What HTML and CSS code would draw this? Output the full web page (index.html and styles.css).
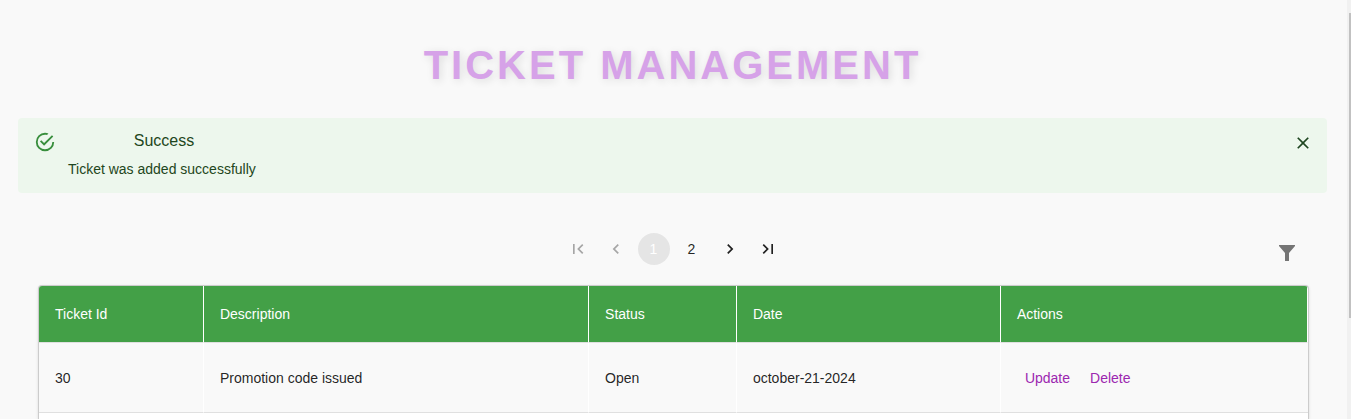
FILE: index.html
```html
<!DOCTYPE html>
<html lang="en">
<head>
<meta charset="utf-8">
<title>Ticket Management</title>
<link rel="stylesheet" href="styles.css">
</head>
<body>
<main class="page">
  <h1 class="title">Ticket Management</h1>
  <div class="alert" role="alert">
    <svg class="alert-icon" viewBox="0 0 24 24" aria-hidden="true"><path d="M20,12A8,8 0 0,1 12,20A8,8 0 0,1 4,12A8,8 0 0,1 12,4C12.76,4 13.5,4.11 14.2,4.31L15.77,2.74C14.61,2.26 13.34,2 12,2A10,10 0 0,0 2,12A10,10 0 0,0 12,22A10,10 0 0,0 22,12M7.91,10.08L6.5,11.5L11,16L21,6L19.59,4.58L11,13.17L7.91,10.08Z"/></svg>
    <div class="alert-message">
      <div class="alert-title">Success</div>
      <div>Ticket was added successfully</div>
    </div>
    <button class="alert-close" type="button" aria-label="Close"><svg viewBox="0 0 24 24"><path d="M19 6.41L17.59 5 12 10.59 6.41 5 5 6.41 10.59 12 5 17.59 6.41 19 12 13.41 17.59 19 19 17.59 13.41 12z"/></svg></button>
  </div>
  <section class="tickets">
    <div class="toolbar">
      <nav class="pagination" aria-label="Pagination">
        <button class="page-item" type="button" disabled aria-label="First page"><svg viewBox="0 0 24 24"><path d="M18.41 16.59L13.82 12l4.59-4.59L17 6l-6 6 6 6zM6 6h2v12H6z"/></svg></button>
        <button class="page-item" type="button" disabled aria-label="Previous page"><svg viewBox="0 0 24 24"><path d="M15.41 7.41L14 6l-6 6 6 6 1.41-1.41L10.83 12z"/></svg></button>
        <button class="page-item page-current" type="button" aria-current="page">1</button>
        <button class="page-item" type="button">2</button>
        <button class="page-item" type="button" aria-label="Next page"><svg viewBox="0 0 24 24"><path d="M10 6L8.59 7.41 13.17 12l-4.58 4.59L10 18l6-6z"/></svg></button>
        <button class="page-item" type="button" aria-label="Last page"><svg viewBox="0 0 24 24"><path d="M5.59 7.41L10.18 12l-4.59 4.59L7 18l6-6-6-6zM16 6h2v12h-2z"/></svg></button>
      </nav>
      <button class="filter" type="button" aria-label="Filter"><svg viewBox="0 0 16 16"><path d="M0 0h16v1l-6 7v8H6V8L0 1z"/></svg></button>
    </div>
    <div class="table-card">
      <table class="table">
        <colgroup><col class="col-id"><col class="col-description"><col class="col-status"><col class="col-date"><col class="col-actions"></colgroup>
        <thead>
          <tr><th>Ticket Id</th><th>Description</th><th>Status</th><th>Date</th><th>Actions</th></tr>
        </thead>
        <tbody>
          <tr><td>30</td><td>Promotion code issued</td><td>Open</td><td>october-21-2024</td><td><div class="actions"><button class="link-button" type="button">Update</button><button class="link-button" type="button">Delete</button></div></td></tr>
        </tbody>
      </table>
    </div>
  </section>
</main>
<div class="scroll-track" aria-hidden="true"><div class="scroll-thumb"></div></div>
</body>
</html>
```
FILE: styles.css
```css
* { box-sizing: border-box; }
html { height: 100%; }
body {
  display: flex;
  height: 100%;
  margin: 0;
  overflow: hidden;
  background: #f9f9f9;
  color: rgba(0, 0, 0, 0.87);
  font: 14px/20px "Liberation Sans", Arial, sans-serif;
}
button {
  border: 0;
  padding: 0;
  background: none;
  color: inherit;
  font: inherit;
  cursor: pointer;
}
svg { display: block; fill: currentColor; }
.page { display: flex; flex: 1; flex-direction: column; min-width: 0; padding: 40px 20px 0 18px; }
.title {
  margin: 0 0 28px;
  color: #d6a2e8;
  font-size: 40px;
  line-height: 50px;
  letter-spacing: 3px;
  text-align: center;
  text-transform: uppercase;
  text-shadow: 2px 2px 8px rgba(0, 0, 0, 0.12);
}
.alert {
  display: flex;
  align-items: flex-start;
  padding: 13px 14px 13px 16px;
  border-radius: 4px;
  background: #edf7ed;
  color: #1e4620;
}
.alert-icon { width: 22px; height: 22px; margin-right: 12px; color: #388e3c; }
.alert-message { flex: 1; padding-bottom: 1px; }
.alert-title {
  width: 192px;
  margin-bottom: 8px;
  font-size: 16px;
  line-height: 20px;
  text-align: center;
}
.alert-close { width: 20px; margin-top: 2px; }
.alert-close svg { width: 20px; height: 20px; }
.tickets { display: flex; flex: 1; flex-direction: column; padding: 40px 18px 0 20px; }
.toolbar {
  display: grid;
  grid-template-columns: 1fr auto 1fr;
  align-items: start;
  margin-bottom: 20px;
}
.pagination { display: flex; grid-column: 2; gap: 6px; margin-right: 2px; }
.page-item {
  display: grid;
  place-items: center;
  width: 32px;
  height: 32px;
  border-radius: 16px;
}
.page-item svg { width: 20px; height: 20px; }
.page-item:disabled { opacity: 0.38; }
.page-current { background: #e5e5e5; color: #fff; }
.filter { justify-self: end; margin: 12px 14px 0 0; color: #757575; }
.filter svg { width: 16px; height: 16px; }
.table-card {
  flex: 1;
  overflow: hidden;
  border: 1px solid #ccc;
  border-bottom: 0;
  border-radius: 4px 4px 0 0;
  background: #fff;
  box-shadow: 0 1px 3px rgba(0, 0, 0, 0.12);
}
.table { width: 100%; border-collapse: separate; border-spacing: 0; table-layout: fixed; }
.col-id { width: 13%; }
.col-description { width: 30.35%; }
.col-status { width: 11.65%; }
.col-date { width: 20.8%; }
.table th,
.table td {
  padding: 0 16px;
  border-right: 1px solid #fff;
  border-bottom: 1px solid #e0e0e0;
  text-align: left;
}
.table td:last-child { border-right: 0; }
.table th { height: 57px; background: #43a047; color: #fff; font-weight: 400; }
.table td { height: 70px; }
.table tbody tr { background: #f9f9f9; }
.actions { display: flex; gap: 20px; padding-left: 8px; }
.link-button { color: #9c27b0; }
.scroll-track { width: 4px; padding: 13px 0 0 2px; background: #f1f1f1; }
.scroll-thumb { height: 75%; background: #c1c1c1; }
```
